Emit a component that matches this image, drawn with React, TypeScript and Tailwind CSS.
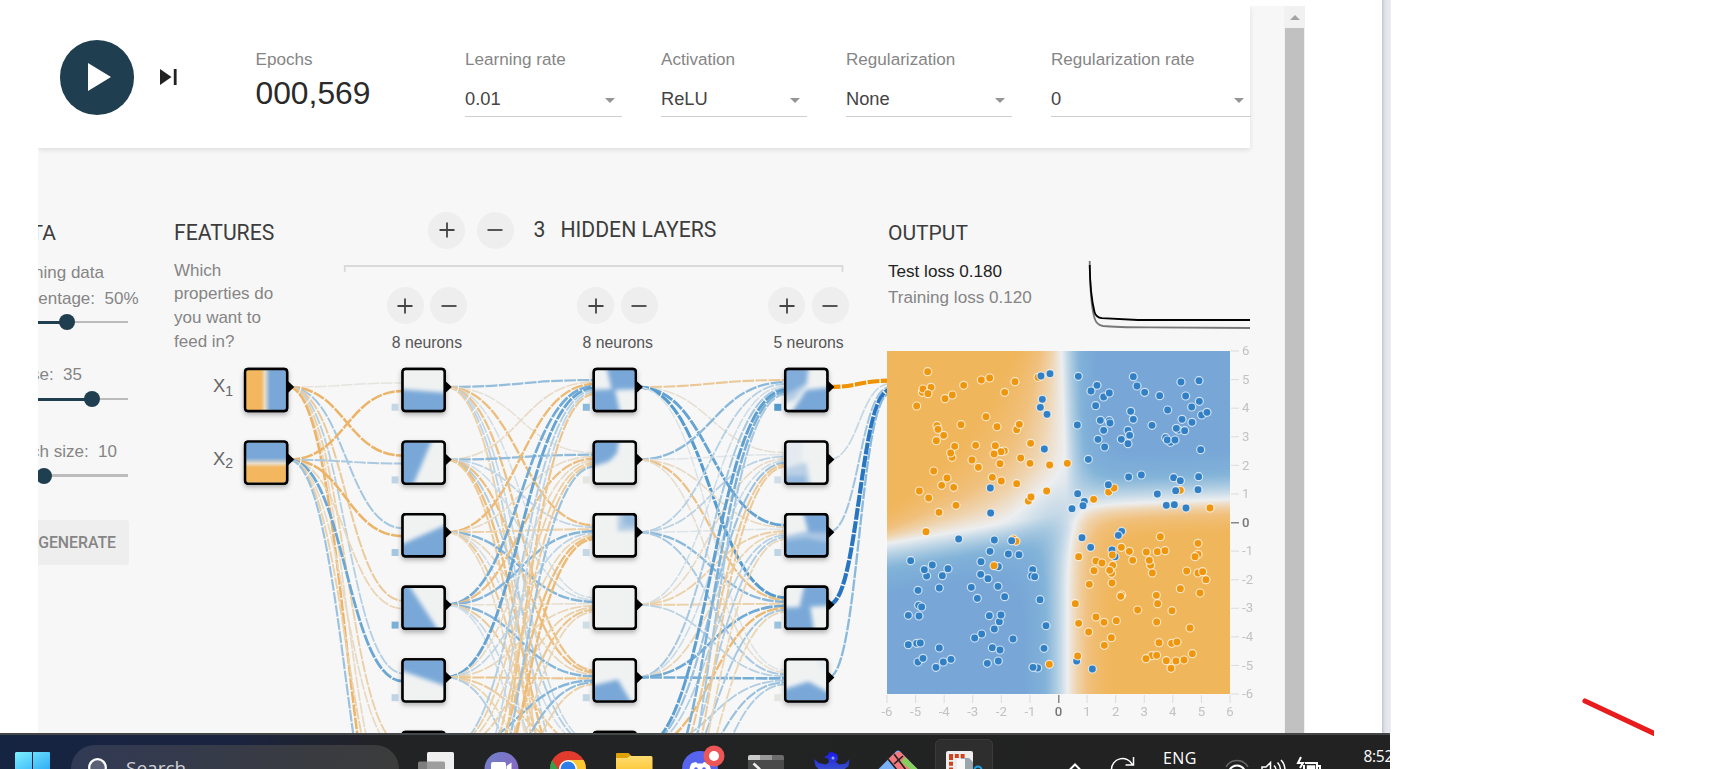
import { useEffect, useRef } from "react";

type Pt = [number, number];

/* ---------- colours ---------- */
const STOPS: [number, number[]][] = [
  [-1, [239, 146, 4]],
  [-0.5, [236, 180, 104]],
  [-0.25, [235, 208, 168]],
  [0, [228, 231, 232]],
  [0.25, [176, 205, 226]],
  [0.5, [122, 175, 215]],
  [0.75, [76, 150, 205]],
  [1, [40, 117, 193]],
];

const FIELD: [number, number[]][] = [
  [-1, [240, 182, 92]],
  [-0.65, [240, 192, 124]],
  [-0.3, [239, 213, 178]],
  [0, [236, 238, 240]],
  [0.3, [184, 210, 228]],
  [0.65, [130, 179, 216]],
  [1, [119, 166, 215]],
];

function mix(stops: [number, number[]][], v: number): number[] {
  const c = Math.max(-1, Math.min(1, v));
  for (let i = 1; i < stops.length; i++) {
    if (c <= stops[i][0]) {
      const [a, ca] = stops[i - 1];
      const [b, cb] = stops[i];
      const t = (c - a) / (b - a);
      return ca.map((x, k) => Math.round(x + (cb[k] - x) * t));
    }
  }
  return stops[stops.length - 1][1];
}
const linkColor = (w: number) => `rgb(${mix(STOPS, w).join(",")})`;

/* ---------- network ---------- */
const LAYER_X = [265.9, 423.4, 614.6, 806.1];
const nodeY = (i: number) => 387 + i * 72.6;

const W1 = [
  [-0.04, -0.5, 0.3, -0.3, 0.22, -0.25, -0.15, -0.5],
  [-0.5, 0.28, -0.5, -0.2, 0.58, -0.15, -0.25, 0.35],
];
const W2 = [
  [0.38, -0.06, -0.42, 0.08, -0.38, 0.15, 0.2, -0.25],
  [-0.14, 0.4, 0.18, 0.12, -0.4, 0.25, -0.42, -0.3],
  [-0.45, -0.14, -0.25, 0.45, -0.18, 0.1, -0.3, -0.15],
  [0.55, -0.4, 0.45, -0.1, 0.45, -0.3, 0.15, 0.1],
  [0.62, -0.15, 0.18, -0.2, -0.35, -0.3, -0.2, 0.25],
  [0.25, -0.25, -0.2, -0.25, 0.45, -0.35, -0.2, 0.1],
  [0.18, -0.3, -0.42, -0.35, 0.4, 0.3, -0.4, 0.2],
  [-0.35, 0.35, -0.45, -0.2, -0.25, 0.1, -0.3, 0.3],
];
const W3 = [
  [-0.32, -0.08, 0.62, 0.7, 0.04],
  [0.42, 0.03, -0.14, -0.38, -0.1],
  [0.22, 0.2, 0.04, 0.42, 0.28],
  [0.1, -0.14, -0.25, -0.25, 0.2],
  [0.3, 0.12, -0.2, 0.55, 0.52],
  [0.66, 0.35, 0.22, -0.45, 0.25],
  [0.5, -0.32, 0.25, 0.3, 0.35],
  [0.3, -0.3, -0.2, -0.2, 0.25],
];
const W4 = [[-1], [0.15], [0.32], [1], [0.42]];

function Links({ weights, from, to }: { weights: number[][]; from: number; to: number }) {
  const n = weights.length;
  return (
    <g fill="none">
      {weights.map((row, i) =>
        row.map((w, j) => {
          const x1 = from + 22.4;
          const y1 = nodeY(i);
          const y2 = nodeY(j) + ((i - (n - 1) / 2) / n) * 15.8;
          const m = (x1 + to) / 2;
          return (
            <path
              key={`${i}-${j}`}
              d={`M${x1},${y1}C${m},${y1} ${m},${y2} ${to},${y2}`}
              stroke={linkColor(w)}
              strokeWidth={1.45 + Math.pow(Math.abs(w), 1.3) * 2.7}
              strokeDasharray="11.8 1.4"
            />
          );
        })
      )}
    </g>
  );
}

type Shape = { p: string; o?: number };
type NodeSpec = { shapes: Shape[]; bias: number };

const HIDDEN: NodeSpec[][] = [
  [
    { bias: 0.15, shapes: [{ p: "-6,19 46,23 46,46 -6,46" }] },
    { bias: 0.18, shapes: [{ p: "-6,-6 30,-6 8,46 -6,46" }] },
    { bias: 0.3, shapes: [{ p: "-6,31 46,8 46,46 -6,46" }] },
    { bias: 0.5, shapes: [{ p: "-6,-6 3,-6 37,46 -6,46" }] },
    { bias: 0.18, shapes: [{ p: "-6,-6 46,-6 46,27 -6,9" }] },
    { bias: 0.2, shapes: [] },
  ],
  [
    { bias: 0.42, shapes: [{ p: "11,-6 46,-6 46,19 17,20" }, { p: "-6,20 20,19 26,46 -6,46" }] },
    { bias: -0.03, shapes: [{ p: "-6,-6 25,-6 22,11 14,19 -6,25" }] },
    { bias: 0.15, shapes: [{ p: "23,-6 46,-6 46,15 23,16", o: 0.5 }, { p: "29,-6 46,-6 46,10 29,10", o: 0.5 }] },
    { bias: 0.1, shapes: [] },
    { bias: 0.16, shapes: [{ p: "-6,26 23,19 39,46 -6,46" }] },
    { bias: 0.2, shapes: [] },
  ],
  [
    {
      bias: 0.72,
      shapes: [
        { p: "-6,-6 23,-6 21,14 8,30 -6,34", o: 0.5 },
        { p: "-6,-6 22,-6 20,13 -6,28", o: 0.85 },
        { p: "3,46 20,20 46,17 46,46" },
      ],
    },
    {
      bias: 0.1,
      shapes: [
        { p: "-6,-6 16,-6 16,22 -6,26", o: 0.1 },
        { p: "-6,27 20,20 25,46 -6,46", o: 0.45 },
        { p: "-6,34 18,33 22,46 -6,46", o: 0.6 },
      ],
    },
    {
      bias: 0.18,
      shapes: [
        { p: "16,-6 46,-6 46,17 22,17" },
        { p: "-6,22 20,16 46,14 46,46 -6,46", o: 0.6 },
        { p: "-6,26 20,23 46,28 46,46 -6,46", o: 0.8 },
      ],
    },
    { bias: 0.35, shapes: [{ p: "19,-6 46,-6 46,18 23,19 13,20" }, { p: "-6,20 24,19 28,46 -6,46" }] },
    { bias: -0.03, shapes: [{ p: "-6,30 22,21 46,34 46,46 -6,46" }, { p: "30,-6 46,-6 46,12 32,8", o: 0.08 }] },
  ],
];

function NodeFrame({ cx, i, children }: { cx: number; i: number; children?: React.ReactNode }) {
  const y = nodeY(i) - 19.2;
  return (
    <g transform={`translate(${cx - 22} ${y})`}>
      <rect width="44.400" height="44.400" rx="4" fill="#000" filter="url(#nodeShadow)" />
      <rect x="1" y="1" width="42.400" height="42.400" rx="3" fill="#f0f2f2" />
      <svg x="2" y="2" width="40.400" height="40.400" viewBox="0 0 40 40">
        {children}
      </svg>
      <rect x="1.2" y="1.2" width="42" height="42" rx="3" fill="none" stroke="#000" strokeWidth="2.4" />
      <path d="M44 13.2 L50.3 19.2 L44 25.2Z" fill="#000" />
    </g>
  );
}

function Network() {
  return (
    <svg className="pointer-events-none absolute inset-0" width="1246" height="585" viewBox="38 148 1246 585">
      <defs>
        <filter id="nodeShadow" x="-30%" y="-30%" width="160%" height="170%">
          <feDropShadow dx="0" dy="2.5" stdDeviation="2.5" floodColor="#000" floodOpacity="0.3" />
        </filter>
        <filter id="soft" filterUnits="userSpaceOnUse" x="-10" y="-10" width="60" height="60">
          <feGaussianBlur stdDeviation="2" />
        </filter>
        <linearGradient id="fx">
          <stop offset="0.38" stopColor="#f3b85f" />
          <stop offset="0.47" stopColor="#e9ddca" />
          <stop offset="0.6" stopColor="#79a8d8" />
        </linearGradient>
        <linearGradient id="fy" x2="0" y2="1">
          <stop offset="0.38" stopColor="#79a8d8" />
          <stop offset="0.52" stopColor="#e9ddca" />
          <stop offset="0.62" stopColor="#f3b85f" />
        </linearGradient>
      </defs>
      <Links weights={W1} from={LAYER_X[0]} to={LAYER_X[1] - 19.8} />
      <Links weights={W2} from={LAYER_X[1]} to={LAYER_X[2] - 19.8} />
      <Links weights={W3} from={LAYER_X[2]} to={LAYER_X[3] - 19.8} />
      <Links weights={W4} from={LAYER_X[3]} to={890} />
      <NodeFrame cx={LAYER_X[0]} i={0}>
        <rect width="40" height="40" fill="url(#fx)" />
      </NodeFrame>
      <NodeFrame cx={LAYER_X[0]} i={1}>
        <rect width="40" height="40" fill="url(#fy)" />
      </NodeFrame>
      {HIDDEN.map((layer, l) =>
        layer.map((n, i) => (
          <g key={`${l}-${i}`}>
            <NodeFrame cx={LAYER_X[l + 1]} i={i}>
              <g filter="url(#soft)" fill="#79a8d8">
                {n.shapes.map((s) => (
                  <polygon key={s.p} points={s.p} opacity={s.o ?? 1} />
                ))}
              </g>
            </NodeFrame>
            <rect x={LAYER_X[l + 1] - 31.8} y={nodeY(i) + 16.8} width="7" height="7" fill={linkColor(n.bias)} />
          </g>
        ))
      )}
      <g fill="none" stroke="#dadada" strokeWidth="1.8">
        <path d="M344.8 272V266H842.5V272" />
      </g>
      <g fill="none" strokeWidth="1.8">
        <path d="M1089.7 261 C1090 290 1092 310 1094.500 318 Q1096.500 325 1103 326 Q1115 327.300 1150 327.400 L1250 328" stroke="#777" />
        <path d="M1089.7 265 C1090 285 1092.500 304 1094.500 312 Q1096 317.500 1102 318.200 L1138 320 L1250 320" stroke="#000" />
      </g>
    </svg>
  );
}

/* ---------- output plot ---------- */
type Batch = { dx: number; dy: number; blue: Pt[]; orange: Pt[]; top?: "blue" | "orange" };

const BATCHES: Batch[] = [
  {
    dx: -27, dy: -11, top: "blue",
    orange: [[203,95],[213,142],[187,157],[189,147],[204,161],[255,176],[277,165],[170,198],[311,136],[364,120],[389,114],[465,125],[434,157],[534,112],[378,230],[231,257],[234,268],[303,254],[411,260],[470,269],[478,253],[251,286],[229,302],[284,319],[347,316],[406,317],[276,352],[272,339],[433,333],[423,335],[402,342],[336,360],[355,382],[420,371],[482,354],[512,310],[510,370],[569,375],[622,370],[221,393],[261,414],[397,412],[424,423],[470,431],[245,436],[281,442],[178,453],[206,474],[560,453],[505,483],[513,471],[288,496],[237,517],[198,575]],
    blue: [[543,108],[570,101],[547,178],[541,202],[561,223],[553,327],[391,444],[392,519]],
  },
  {
    dx: 173, dy: -11, top: "blue",
    orange: [[361,451],[450,504],[301,590]],
    blue: [[55,109],[111,136],[93,153],[131,171],[148,159],[107,197],[220,110],[231,138],[254,157],[299,167],[363,126],[417,122],[377,168],[418,184],[395,201],[323,210],[425,225],[441,217],[52,255],[121,241],[148,242],[150,249],[212,214],[220,238],[276,256],[366,238],[396,247],[131,271],[355,270],[349,265],[374,272],[204,271],[209,286],[184,298],[204,311],[317,293],[331,307],[322,300],[345,300],[114,298],[134,321],[422,329],[85,358],[206,411],[244,405],[341,413],[361,422],[416,410],[414,449],[292,462],[347,452],[53,461],[73,484],[69,497],[36,506],[319,496],[343,494],[378,504],[66,593],[185,574],[175,586]],
  },
  { dx: 173, dy: -11, top: "blue", orange: [[146,456],[162,444],[101,478]], blue: [[145,434]] },
  {
    dx: -27, dy: 179, top: "orange",
    blue: [[296,27],[403,30],[390,64],[445,72],[477,74],[363,95],[415,110],[152,92],[217,105],[264,116],[200,138],[193,119],[247,137],[362,133],[384,146],[518,119],[515,138],[524,140],[334,172],[414,169],[174,181],[238,174],[434,200],[352,205],[540,209],[176,226],[185,231],[145,256],[177,258],[388,257],[418,275],[423,255],[403,297],[558,287],[365,312],[344,324],[459,327],[145,344],[170,340],[181,339],[238,354],[397,353],[420,360],[552,355],[174,396],[189,385],[250,396],[273,388],[228,412],[382,400],[415,393],[533,414],[519,412]],
    orange: [[402,107],[568,403],[460,27],[468,34]],
  },
  { dx: -27, dy: 179, top: "blue", orange: [], blue: [[455,32]] },
  {
    dx: 173, dy: 179, top: "orange",
    blue: [[92,52],[156,60],[165,80],[50,393],[97,417]],
    orange: [[414,40],[184,52],[208,64],[259,66],[292,65],[315,62],[414,73],[405,80],[56,80],[218,91],[108,93],[126,99],[158,106],[157,75],[272,106],[268,91],[155,130],[102,122],[149,121],[277,129],[380,123],[414,129],[428,125],[438,149],[156,159],[88,163],[361,176],[420,189],[185,195],[182,199],[289,196],[293,221],[46,221],[233,240],[336,242],[108,261],[56,280],[132,277],[169,272],[290,276],[390,294],[86,306],[154,323],[133,346],[297,338],[335,340],[351,336],[397,371],[53,378],[275,377],[290,376],[258,386],[319,392],[348,393],[372,390],[333,415]],
  },
];

const SIZE = 343;

function boundary(x: number, y: number): number {
  const xb = y < 120 ? 174 + y * 0.035 : y < 175 ? 178 + (y - 120) * 0.02 : 180;
  const yb = x < 150 ? 192 - x * 0.17 : x < 200 ? 166.5 - (x - 150) * 0.26 : 153.5 - (x - 200) * 0.04;
  const dx = x - xb;
  const dy = yb - y;
  const wx = dx < 0 ? (dy > 0 ? 38 + y * 0.45 : 40) : dy > 0 ? 32 : 38;
  const wy = dx < 0 ? (dy > 0 ? 26 + x * 0.35 : 46) : dy > 0 ? 46 : 28;
  const r2 = (x - 166) ** 2 + (y - 166) ** 2;
  return Math.tanh((dx / wx) * 1.2) * Math.tanh((dy / wy) * 1.2) * 1.12 + 0.22 * Math.exp(-r2 / 1300);
}

function Heatmap() {
  const ref = useRef<HTMLCanvasElement>(null);
  useEffect(() => {
    const ctx = ref.current?.getContext("2d");
    if (!ctx) return;
    const img = ctx.createImageData(SIZE, SIZE);
    for (let y = 0; y < SIZE; y++) {
      for (let x = 0; x < SIZE; x++) {
        const c = mix(FIELD, boundary(x, y));
        const o = (y * SIZE + x) * 4;
        img.data[o] = c[0];
        img.data[o + 1] = c[1];
        img.data[o + 2] = c[2];
        img.data[o + 3] = 255;
      }
    }
    ctx.putImageData(img, 0, 0);
  }, []);
  return <canvas ref={ref} width={SIZE} height={SIZE} className="block h-[343px] w-[343px]" />;
}

function Dots({ pts, fill }: { pts: Pt[]; fill: string }) {
  return (
    <>
      {pts.map(([x, y], i) => (
        <circle key={i} cx={x} cy={y} r="12" fill={fill} stroke="#fff" strokeOpacity="0.72" strokeWidth="3.6" />
      ))}
    </>
  );
}

const TICKS = [-6, -5, -4, -3, -2, -1, 0, 1, 2, 3, 4, 5, 6];

function OutputPlot() {
  return (
    <div className="relative h-[382px] w-[380px]">
      <Heatmap />
      <svg className="absolute left-0 top-0 overflow-visible" width="380" height="382">
        {BATCHES.map((b, i) => {
          const blue = <Dots key="b" pts={b.blue} fill="#3180c6" />;
          const orange = <Dots key="o" pts={b.orange} fill="#ef960f" />;
          return (
            <g key={i} transform={`translate(${b.dx} ${b.dy}) scale(0.33333)`}>
              {b.top === "orange" ? [blue, orange] : [orange, blue]}
            </g>
          );
        })}
        <g fontFamily="Roboto, 'Liberation Sans', sans-serif" fontSize="13.2">
          {TICKS.map((t) => {
            const px = ((t + 6) / 12) * SIZE;
            const zero = t === 0;
            const ink = zero ? "#777" : "#c2c2c2";
            return (
              <g key={t} fill={ink} stroke="none">
                <rect x={px - 0.5} y="344" width={zero ? 1.5 : 1} height="8" fill={zero ? "#888" : "#dcdcdc"} />
                <text x={px} y="364.500" textAnchor="middle" fontWeight={zero ? 500 : 400}>{t}</text>
                <rect x="344" y={SIZE - px - 0.5} width="8" height={zero ? 1.5 : 1} fill={zero ? "#888" : "#dcdcdc"} />
                <text x="355" y={SIZE - px + 4.2} fontWeight={zero ? 500 : 400}>{t}</text>
              </g>
            );
          })}
        </g>
      </svg>
    </div>
  );
}

/* ---------- controls ---------- */
function RoundButton({ plus }: { plus?: boolean }) {
  return (
    <button className="flex size-[37px] items-center justify-center rounded-full bg-[#eeeeee]">
      <svg width="16" height="16" viewBox="0 0 16 16" stroke="#444" strokeWidth="1.8">
        <path d={plus ? "M.5 8h15M8 .5v15" : "M.5 8h15"} />
      </svg>
    </button>
  );
}

function Select({ label, value, className }: { label: string; value: string; className: string }) {
  return (
    <div className={`shrink-0 pt-[44px] ${className}`}>
      <div className="text-[17.1px] leading-[20px] whitespace-nowrap text-[#858585]">{label}</div>
      <div className="mt-[16.500px] flex h-[30px] items-center justify-between border-b border-[#cfcfcf] pb-[6px]">
        <span className="text-[18.3px] leading-[21px] text-[#444]">{value}</span>
        <svg className="mr-[7px] mt-[5px]" width="10" height="5" viewBox="0 0 10 5">
          <path d="M0 0h10L5 5z" fill="#959595" />
        </svg>
      </div>
    </div>
  );
}

function Slider({ knob, filled }: { knob: string; filled: string }) {
  return (
    <div className="relative flex h-4 w-[90px] items-center">
      <div className={`h-[3px] bg-[#1f3f50] ${filled}`} />
      <div className="h-[2.500px] flex-1 bg-[#bcbcbc]" />
      <div className={`absolute top-0 size-4 rounded-full bg-[#1f3f50] ${knob}`} />
    </div>
  );
}

function NeuronControls({ count, className }: { count: number; className: string }) {
  return (
    <div className={`flex w-[82px] flex-col items-center ${className}`}>
      <div className="flex gap-[6.500px]">
        <RoundButton plus />
        <RoundButton />
      </div>
      <div className="mt-[9px] text-[15.8px] leading-[20px] whitespace-nowrap text-[#555]">{count} neurons</div>
    </div>
  );
}

function Header() {
  return (
    <header className="relative z-10 flex h-[142px] w-[1212px] bg-white shadow-[0_2px_5px_rgba(0,0,0,0.1)]">
      <button className="mt-[34px] ml-[21.500px] flex size-[74.500px] shrink-0 items-center justify-center rounded-full bg-[#1f3f50]">
        <svg width="24" height="28" viewBox="0 0 24 28" className="mb-px ml-[7px]">
          <path d="M0 0L23 14L0 28Z" fill="#fff" />
        </svg>
      </button>
      <svg className="mt-[63px] ml-[26px] shrink-0" width="17" height="16" viewBox="0 0 17 16">
        <path d="M0 0L11.500 8L0 16ZM13.800 0H16.600V16H13.800Z" fill="#222" />
      </svg>
      <div className="ml-[78.500px] w-[209.500px] shrink-0 pt-[44px]">
        <div className="text-[17.1px] leading-[20px] text-[#858585]">Epochs</div>
        <div className="mt-[5px] text-[31.8px] leading-[36px] text-[#2a2a2a]">000,569</div>
      </div>
      <Select label="Learning rate" value="0.01" className="w-[156.500px]" />
      <Select label="Activation" value="ReLU" className="ml-[39.500px] w-[145.500px]" />
      <Select label="Regularization" value="None" className="ml-[39.500px] w-[165.500px]" />
      <Select label="Regularization rate" value="0" className="ml-[39.500px] w-[200px]" />
    </header>
  );
}

function DataColumn() {
  return (
    <section className="h-[585px] w-[136px] shrink-0 overflow-hidden pt-[72.500px] text-[17px] text-[#858585]">
      <h4 className="flex w-[18px] justify-end font-[Roboto] text-[21px] leading-[24px] font-normal text-[#3c3c3c]">DATA</h4>
      <div className="mt-[15px] flex w-[66px] justify-end leading-[26px] whitespace-nowrap">Training data</div>
      <div className="flex w-[100.500px] justify-end leading-[26px] whitespace-pre">percentage:  50%</div>
      <div className="mt-[2.500px]"><Slider filled="w-[29px]" knob="left-[21px]" /></div>
      <div className="mt-[32px] flex w-[44px] justify-end leading-[26px] whitespace-pre">Noise:  35</div>
      <div className="mt-[3px]"><Slider filled="w-[54px]" knob="left-[46px]" /></div>
      <div className="mt-[31.500px] flex w-[79px] justify-end leading-[26px] whitespace-pre">Batch size:  10</div>
      <div className="mt-[3px]"><Slider filled="w-[6px]" knob="-left-[2px]" /></div>
      <button className="mt-[36.500px] flex h-[45px] w-[91px] items-center justify-end rounded-r-[3px] bg-[#eeeeee] pr-[13px] font-[Roboto] text-[15.8px] font-medium text-[#858585]">
        REGENERATE
      </button>
    </section>
  );
}

function FeaturesColumn() {
  return (
    <section className="w-[171px] shrink-0 pt-[72.500px] text-[17px]">
      <h4 className="font-[Roboto] text-[21.2px] leading-[24px] font-normal text-[#3c3c3c]">FEATURES</h4>
      <p className="mt-[14px] w-[104px] leading-[23.700px] text-[#858585]">Which properties do you want to feed in?</p>
      <div className="mt-[21px] ml-[39px] text-[18.4px] leading-[24px] text-[#666]">
        <div className="h-[72.600px]">X<sub className="text-[14px]">1</sub></div>
        <div>X<sub className="text-[14px]">2</sub></div>
      </div>
    </section>
  );
}

function HiddenColumn() {
  return (
    <section className="w-[504px] shrink-0 pt-[63.500px]">
      <div className="flex items-center pl-[83px]">
        <RoundButton plus />
        <div className="w-[11.500px]" />
        <RoundButton />
        <h4 className="ml-[20px] pb-px font-[Roboto] text-[21.2px] leading-[24px] font-normal text-[#3c3c3c]">3</h4>
        <h4 className="ml-[15px] pb-px font-[Roboto] text-[21.2px] leading-[24px] font-normal text-[#3c3c3c]">HIDDEN LAYERS</h4>
      </div>
      <div className="mt-[38.500px] flex">
        <NeuronControls count={8} className="ml-[41.500px]" />
        <NeuronControls count={8} className="ml-[110px]" />
        <NeuronControls count={5} className="ml-[110px]" />
      </div>
    </section>
  );
}

function OutputColumn() {
  return (
    <section className="relative z-10 ml-[38px] w-[380px] shrink-0 pt-[73px] text-[17.1px]">
      <h4 className="ml-px font-[Roboto] text-[21px] leading-[24px] font-normal text-[#3c3c3c]">OUTPUT</h4>
      <div className="mt-[14px] ml-px leading-[26px] text-[#222]">Test loss 0.180</div>
      <div className="ml-px leading-[26px] text-[#858585]">Training loss 0.120</div>
      <div className="mt-[40px]"><OutputPlot /></div>
    </section>
  );
}

/* ---------- taskbar ---------- */
function Taskbar() {
  return (
    <div className="relative flex h-[36px] w-[1390px] items-start overflow-hidden border-t-2 border-[#444648] bg-[linear-gradient(90deg,#152440_0px,#1a2340_230px,#222324_390px,#222222_1390px)] font-['Open_Sans'] text-white">
      <svg className="mt-[17px] ml-[15px] shrink-0" width="35" height="20">
        <defs>
          <linearGradient id="win" x2="1" y2="1">
            <stop offset="0" stopColor="#7df0ff" />
            <stop offset="1" stopColor="#2aa8f5" />
          </linearGradient>
        </defs>
        <path d="M1 0H17V17H0V1ZM18 0H34Q35 0 35 1V17H18ZM0 18H17V20H0ZM18 18H35V20H18Z" fill="url(#win)" />
      </svg>
      <div className="mt-[10px] ml-[21px] flex h-[48px] w-[328px] shrink-0 items-start rounded-full bg-[linear-gradient(90deg,#313a55,#383b44_60%,#3c3c3c)] pl-[17px]">
        <svg className="mt-[13px]" width="24" height="24" fill="none" stroke="#fff" strokeWidth="2.200">
          <circle cx="9.500" cy="9.500" r="8.300" fill="#5c6275" />
          <path d="M15 16l7 7" />
        </svg>
        <span className="mt-[10px] ml-[14px] text-[19px] leading-[26px] text-[#cfd0d6]">Search</span>
      </div>
      <svg className="absolute left-[400px] top-0" width="990" height="34" viewBox="400 735 990 34">
        <defs>
          <linearGradient id="chat" x2="1" y2="1"><stop offset="0" stopColor="#6f83c9" /><stop offset="1" stopColor="#8e5fc0" /></linearGradient>
          <linearGradient id="fold" x2="0" y2="1"><stop offset="0" stopColor="#ffdc70" /><stop offset="1" stopColor="#fcc93c" /></linearGradient>
          <linearGradient id="bird" x2="0" y2="1"><stop offset="0" stopColor="#1a1af0" /><stop offset="1" stopColor="#3a50c8" /></linearGradient>
          <clipPath id="chromeClip"><circle cx="568" cy="769" r="18" /></clipPath>
          <clipPath id="gitClip"><path d="M896 751.500q2-2 4 0l18 18h-40z" /></clipPath>
        </defs>
        <rect x="427" y="752" width="27" height="30" rx="1.500" fill="#efefef" />
        <rect x="418" y="761.500" width="27" height="20" rx="1.500" fill="#8e8e8e" fillOpacity=".85" />
        <circle cx="501.500" cy="769" r="17" fill="url(#chat)" />
        <path d="M491 764q0-2 2-2h11q2 0 2 2v8h-15zM506.500 766l5-3.500v9h-5z" fill="#fff" />
        <g clipPath="url(#chromeClip)">
          <rect x="548" y="749" width="40" height="40" fill="#e13b2d" />
          <path d="M546 750L561 774L560 790L545 790Z" fill="#33a04a" />
          <path d="M568 760H590V790H568Z" fill="#fbc733" />
        </g>
        <circle cx="568" cy="769" r="9" fill="#fff" />
        <circle cx="568" cy="769" r="7.500" fill="#2f7de8" />
        <path d="M616 754q0-1 1-1h11.500l3 3H650v5h-34z" fill="#dfa108" />
        <path d="M616 758h11l3-2h21q1.500 0 1.500 1.500V770H616z" fill="url(#fold)" />
        <circle cx="700" cy="769" r="18" fill="#5764ee" />
        <path d="M689.500 770q0-5 2.500-7l4-1 1.500 1.500h5L704 762l4 1q2.500 2 3 7z" fill="#fff" />
        <circle cx="696" cy="769" r="1.800" fill="#5764ee" /><circle cx="704" cy="769" r="1.800" fill="#5764ee" />
        <circle cx="714" cy="756" r="10.500" fill="#ec5657" />
        <circle cx="714" cy="756" r="5" fill="#fff" />
        <path d="M748 757q0-2 2-2h10v5h-12z" fill="#cbcbcb" /><path d="M760 755h12v5h-12z" fill="#999" /><path d="M772 755h10q2 0 2 2v3h-12z" fill="#6c6c6c" />
        <rect x="748" y="760" width="36" height="10" fill="#4a4a4a" />
        <path d="M753.500 763.500l6.500 6" stroke="#eee" strokeWidth="2.600" />
        <path d="M814 759l5 4 7 1.500 3-2.500-.5-3-4.500-2 3.500-1.500 2-3.500 4 .5 4 2.500.5 4-2.500 3 4 2.500 6-1 4-4.500-1 7-5 4h-24l-4-4z" fill="url(#bird)" />
        <circle cx="833" cy="758" r="1.500" fill="#8fa4ff" />
        <g clipPath="url(#gitClip)">
          <rect x="878" y="750" width="42" height="20" fill="#7ab0f5" />
          <path d="M886 756L904 750L914 770H898Z" fill="#f3797f" />
          <path d="M905 757L920 770H911L901 762Z" fill="#85cf5c" />
          <path d="M888 759l9 11M894 754l12 16M903 756l-9 8" stroke="#222" strokeWidth="1.600" />
        </g>
        <rect x="935.500" y="739.500" width="57" height="40" rx="5" fill="#2e2e2e" stroke="#3b3b3b" />
        <rect x="946" y="751" width="27" height="22" rx="2" fill="#eee" />
        <path d="M961 758h8l4 4v8h-12z" fill="#9aa5ae" /><path d="M957 759h8v10h-8z" fill="#f8f8f8" />
        <path d="M949 756h16M951 756v13" stroke="#d2431c" strokeWidth="4" strokeDasharray="4 1.800" />
        <circle cx="978" cy="770" r="3.500" fill="none" stroke="#1ba0e2" strokeWidth="2" />
        <g fill="none" stroke="#fff" strokeWidth="1.500">
          <path d="M1070 769.500l5-5 5 5" strokeWidth="2" />
          <path d="M1111.500 770a11 11 0 0 1 21-5M1133.500 757v8h-8" />
          <path d="M1226 767a12.500 12.500 0 0 1 22 0" stroke="#666" />
          <path d="M1229.500 770a8.500 8.500 0 0 1 15 0" strokeWidth="2" />
          <path d="M1262 770v-3h4l4.500-4.500v8M1274 765.500q2 2 2 5M1277.500 762.500q3 3 3 8M1281 760q4 4 4 10" />
          <path d="M1305 763h12v7M1304 765v5M1317 766h3v4" strokeWidth="2" />
          <path d="M1307.500 766h7v4h-7z" fill="#fff" />
          <path d="M1301 757l-3 6h5l-3 5" strokeWidth="2" />
        </g>
      </svg>
      <span className="absolute left-[1163px] top-[12px] text-[16px] leading-[22px] tracking-[0.4px]">ENG</span>
      <span className="absolute left-[1363.500px] top-[10px] text-[15.500px] leading-[22px] tracking-[-0.3px]">8:52</span>
    </div>
  );
}

export default function App() {
  return (
    <div className="relative flex h-[769px] w-[1722px] flex-col overflow-hidden bg-white font-['Liberation_Sans',Arial,sans-serif]">
      <div className="flex h-[733px]">
        <main className="mt-[6px] ml-[38px] h-[727px] w-[1246px] shrink-0 overflow-hidden bg-[#f7f7f7]">
          <Header />
          <div className="relative flex h-[585px]">
            <DataColumn />
            <FeaturesColumn />
            <HiddenColumn />
            <OutputColumn />
            <Network />
          </div>
        </main>
        <div className="mt-[6px] flex w-[21px] shrink-0 flex-col items-center bg-[#f1f1f1]">
          <svg className="mt-[9px] mb-[8px]" width="10" height="5" viewBox="0 0 10 5">
            <path d="M0 5L5 0L10 5Z" fill="#a3a3a3" />
          </svg>
          <div className="w-[18.500px] flex-1 bg-[#c1c1c1]" />
        </div>
        <div className="ml-[77px] w-[9px] shrink-0 bg-[linear-gradient(90deg,#c3c7ce,#e0e3e9_35%,#eaecf1)]" />
      </div>
      <Taskbar />
      <svg className="absolute left-[1578px] top-[695px]" width="76" height="46">
        <path d="M7 6L86 43" stroke="#e81c1c" strokeWidth="5.200" strokeLinecap="round" />
      </svg>
    </div>
  );
}
